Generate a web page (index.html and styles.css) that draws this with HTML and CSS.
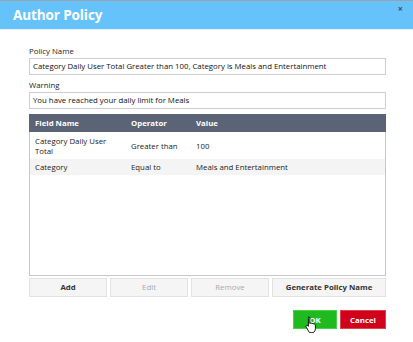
FILE: index.html
```html
<!DOCTYPE html>
<html>
<head>
<meta charset="utf-8">
<link rel="stylesheet" href="styles.css">
</head>
<body>
<div class="dialog">
  <div class="titlebar">
    <h1 class="title">Author Policy</h1>
    <span class="close">&#215;</span>
  </div>
  <div class="content">
    <div class="label">Policy Name</div>
    <div class="input">Category Daily User Total Greater than 100, Category is Meals and Entertainment</div>
    <div class="label">Warning</div>
    <div class="input">You have reached your daily limit for Meals</div>
    <div class="table">
      <div class="row head">
        <div class="c1">Field Name</div>
        <div class="c2">Operator</div>
        <div class="c3">Value</div>
      </div>
      <div class="row tall">
        <div class="c1">Category Daily User<br>Total</div>
        <div class="c2">Greater than</div>
        <div class="c3">100</div>
      </div>
      <div class="row alt">
        <div class="c1">Category</div>
        <div class="c2">Equal to</div>
        <div class="c3">Meals and Entertainment</div>
      </div>
    </div>
    <div class="actions">
      <div class="btn b1">Add</div>
      <div class="btn b2 disabled">Edit</div>
      <div class="btn b3 disabled">Remove</div>
      <div class="btn b4">Generate Policy Name</div>
    </div>
    <div class="footer">
      <div class="fbtn ok">OK
        <svg class="cursor" width="12" height="17" viewBox="0 0 12 17">
          <path d="M3.5 1.2c.8 0 1.3.5 1.3 1.3v5l.4-.1c.5-.5 1.5-.4 1.8.3.6-.4 1.5-.2 1.8.5.6-.3 1.6 0 1.6.9v3.6c0 1.800-1 3.3-2.300 4H4.5L1.3 11.3c-.5-.7-.3-1.5.4-1.800.5-.2 1 0 1.4.4l.3.4V2.5c0-.8.5-1.300 1.100-1.300z" fill="#fff" stroke="#000" stroke-width="0.9" stroke-linejoin="round"/>
        </svg>
      </div>
      <div class="fbtn cancel">Cancel</div>
    </div>
  </div>
</div>
</body>
</html>
```
FILE: styles.css
```css
html, body {
  margin: 0;
  padding: 0;
  background: #fff;
}
body {
  font-family: "Open Sans", "Liberation Sans", sans-serif;
  font-size: 7.8px;
  color: #222;
}
.dialog {
  width: 413px;
  height: 342px;
  box-sizing: border-box;
  border-top: 1px solid #9aa3ab;
}
.titlebar {
  height: 28px;
  background: #66c2fb;
  display: flex;
  align-items: center;
  justify-content: space-between;
  padding: 0 10px 0 13px;
  border-bottom: 1px solid #e6f2fb;
}
.title {
  margin: 0;
  font-size: 13.5px;
  font-weight: 700;
  color: #fff;
  letter-spacing: -0.1px;
  padding-bottom: 1px;
}
.close {
  align-self: flex-start;
  margin-top: 1px;
  font-size: 9px;
  color: #3a4c66;
  font-weight: 700;
}
.content {
  padding: 16px 27px 0 29px;
}
.label {
  height: 11px;
  line-height: 11px;
  color: #222;
}
.input {
  height: 15px;
  line-height: 15px;
  border: 1px solid #cfcfcf;
  padding: 0 3px;
  margin-top: 1px;
  margin-bottom: 5px;
  white-space: nowrap;
  color: #111;
}
.table {
  height: 162px;
  border: 1px solid #c8c8c8;
  border-top: 0;
  margin-top: 2px;
  box-sizing: border-box;
}
.row {
  display: flex;
  align-items: center;
}
.row .c1 { width: 96px; padding-left: 5px; box-sizing: border-box; }
.row .c2 { width: 65px; padding-left: 5px; box-sizing: border-box; }
.row .c3 { flex: 1; padding-left: 5px; }
.head {
  height: 18px;
  background: #5b6477;
  color: #fff;
  font-weight: 700;
  margin: 0 -1px;
  padding: 0 1px;
}
.tall {
  height: 27px;
  line-height: 10px;
}
.alt {
  height: 16px;
  background: #f4f4f4;
}
.actions {
  display: flex;
  gap: 3px;
  margin-top: 2px;
}
.btn {
  height: 17px;
  line-height: 17px;
  border: 1px solid #e2e2e2;
  background: #f5f5f5;
  text-align: center;
  font-weight: 700;
  color: #333;
}
.b1 { width: 76px; }
.b2 { width: 76px; }
.b3 { width: 76px; }
.b4 { flex: 1; }
.disabled { color: #aaa; font-weight: 400; }
.footer {
  display: flex;
  justify-content: flex-end;
  gap: 3px;
  margin-top: 13px;
}
.fbtn {
  position: relative;
  width: 44px;
  height: 19px;
  line-height: 18px;
  text-align: center;
  color: #fff;
  font-weight: 700;
  box-sizing: border-box;
}
.ok {
  background: #1fba1f;
  border: 1px solid #49d049;
}
.cancel {
  width: 46px;
  background: #d0021b;
  border: 1px solid #e0404f;
}
.cursor {
  position: absolute;
  left: 11px;
  top: 5px;
}
```
